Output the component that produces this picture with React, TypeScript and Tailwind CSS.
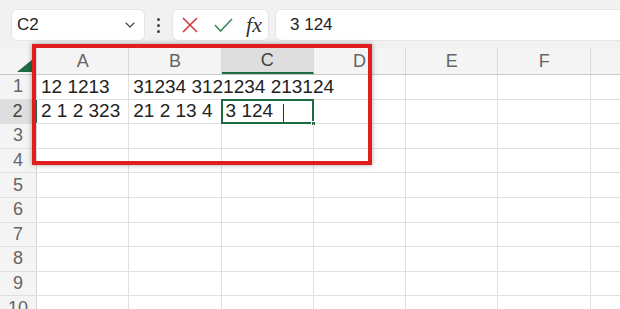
import { ChevronDown } from 'lucide-react';

const cols = ['A', 'B', 'C', 'D', 'E', 'F'];

// contenido de las celdas, por fila
const data: Record<number, Record<string, string>> = {
  1: { A: '12 1213', B: '31234 3121234 213124' },
  2: { A: '2 1 2 323', B: '21 2 13 4', C: '3 124' },
};

export default function App() {
  const rows = [1, 2, 3, 4, 5, 6, 7, 8, 9, 10];

  return (
    <div className="relative w-[620px] h-[309px] overflow-hidden bg-white text-[#222]" style={{ fontFamily: '"Liberation Sans", Arial, sans-serif' }}>
      {/* Barra de fórmulas */}
      <div className="h-[48px] bg-[#f1f1f1] flex items-start pt-[10px]">
        <div className="ml-[12px] w-[132px] h-[30px] bg-white rounded-[5px] flex items-center pl-[5px] pr-[6px] shadow-[0_0_0_1px_#e6e6e6]">
          <span className="text-[17px] flex-1">C2</span>
          <ChevronDown size={16} strokeWidth={1.6} className="text-[#444]" />
        </div>
        <div className="w-[29px] h-[30px] flex flex-col items-center justify-center gap-[3px]">
          <span className="w-[3px] h-[3px] rounded-full bg-[#444]" />
          <span className="w-[3px] h-[3px] rounded-full bg-[#444]" />
          <span className="w-[3px] h-[3px] rounded-full bg-[#444]" />
        </div>
        <div className="w-[95px] h-[30px] bg-white rounded-[5px] flex items-center justify-between pl-[8px] pr-[6px] shadow-[0_0_0_1px_#e6e6e6]">
          <svg width="18" height="18" viewBox="0 0 18 18">
            <path d="M2 2 L16 16 M16 2 L2 16" stroke="#d8393b" strokeWidth="1.6" fill="none" />
          </svg>
          <svg width="20" height="18" viewBox="0 0 20 18">
            <path d="M2 9 L7.5 15 L19 3" stroke="#3d8a5c" strokeWidth="1.6" fill="none" />
          </svg>
          <span className="text-[22px] italic text-[#333] leading-none" style={{ fontFamily: '"Liberation Serif", serif' }}>fx</span>
        </div>
        <div className="ml-[8px] flex-1 h-[30px] bg-white rounded-l-[5px] flex items-center pl-[14px] shadow-[0_0_0_1px_#e6e6e6]">
          <span className="text-[17px]">3 124</span>
        </div>
      </div>

      {/* Hoja */}
      <div className="flex h-[27px] bg-[#f4f4f4] border-b border-[#c9c9c9]">
        <div className="w-[37px] shrink-0 relative border-r border-[#d4d4d4]">
          <svg className="absolute right-[3px] bottom-[2px]" width="16" height="13" viewBox="0 0 16 13">
            <path d="M16 0 L16 13 L0 13 Z" fill="#1f6b45" />
          </svg>
        </div>
        {cols.map((c) => (
          <div
            key={c}
            className={`w-[92.3px] shrink-0 flex items-center justify-center text-[18px] border-r border-[#dadada] ${c === 'C' ? 'bg-[#dedede] border-b-2 border-b-[#1d6b41] text-[#444]' : 'text-[#666]'}`}
          >
            {c}
          </div>
        ))}
        <div className="flex-1" />
      </div>

      {rows.map((r) => (
        <div key={r} className="flex h-[24.6px] border-b border-[#e0e0e0]">
          <div className={`w-[37px] shrink-0 flex items-center justify-center text-[18px] ${r === 2 ? 'bg-[#dedede] text-[#444] border-r-2 border-[#1d6b41]' : 'bg-[#f4f4f4] text-[#666] border-r border-[#d4d4d4]'}`}>
            {r}
          </div>
          {cols.map((c) => {
            const val = data[r]?.[c];
            const hideRight = r === 1 && (c === 'B' || c === 'C');
            const selected = r === 2 && c === 'C';
            return (
              <div
                key={c}
                className={`relative w-[92.3px] shrink-0 flex items-center pl-[4px] text-[19px] whitespace-nowrap ${hideRight ? '' : 'border-r border-[#e0e0e0]'}`}
              >
                {val}
                {selected && (
                  <>
                    <div className="absolute -left-[1px] -top-[1px] -right-[1px] -bottom-[1px] border-2 border-[#1d6b41]" />
                    <div className="absolute right-[29px] top-[4px] h-[18px] w-[1px] bg-[#333]" />
                    <div className="absolute -right-[3px] -bottom-[3px] w-[5px] h-[5px] bg-[#1d6b41] border border-white" />
                  </>
                )}
              </div>
            );
          })}
          <div className="flex-1" />
        </div>
      ))}

      {/* Recuadro rojo */}
      <div className="absolute left-[32px] top-[44px] w-[340px] h-[121px] border-4 border-[#e01e1e] shadow-[0_0_5px_rgba(0,0,0,0.35)]" />
    </div>
  );
}
